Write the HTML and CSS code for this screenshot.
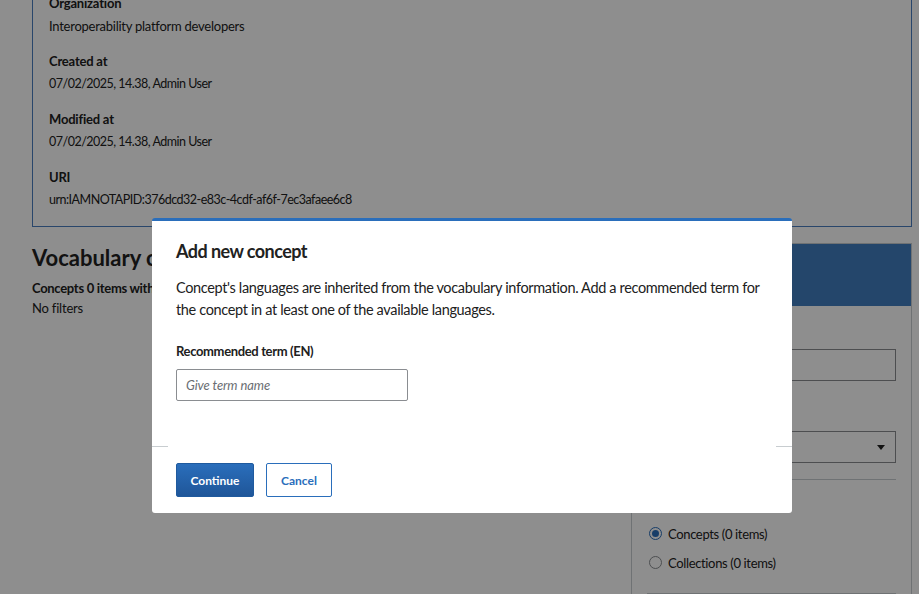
FILE: index.html
```html
<!DOCTYPE html>
<html lang="en">
<head>
<meta charset="utf-8">
<title>Add new concept</title>
<link rel="stylesheet" href="styles.css">
</head>
<body>
<div class="page">
  <section class="info-box">
    <div class="info-group"><div class="info-label">Organization</div><div class="info-value">Interoperability platform developers</div></div>
    <div class="info-group"><div class="info-label">Created at</div><div class="info-value numeric">07/02/2025, 14.38, Admin User</div></div>
    <div class="info-group"><div class="info-label">Modified at</div><div class="info-value numeric">07/02/2025, 14.38, Admin User</div></div>
    <div class="info-group"><div class="info-label">URI</div><div class="info-value numeric">urn:IAMNOTAPID:376dcd32-e83c-4cdf-af6f-7ec3afaee6c8</div></div>
  </section>
  <div class="columns">
    <main class="main-col">
      <h2 class="section-title">Vocabulary concepts</h2>
      <div class="result-count">Concepts 0 items with the selected filters</div>
      <div class="filters">No filters</div>
    </main>
    <aside class="sidebar">
      <div class="sidebar-head">Filter list</div>
      <div class="sidebar-body">
        <div class="field">
          <label class="field-label">Search by term</label>
          <div class="fake-input"></div>
        </div>
        <div class="field">
          <label class="field-label">Status</label>
          <div class="fake-select"><span class="caret"></span></div>
        </div>
        <div class="rule"></div>
        <div class="field radios">
          <div class="field-label">Show only</div>
          <div class="radio-row"><span class="radio checked"></span>Concepts (0 items)</div>
          <div class="radio-row"><span class="radio"></span>Collections (0 items)</div>
        </div>
        <div class="rule"></div>
      </div>
    </aside>
  </div>
</div>
<div class="overlay"></div>
<div class="dialog">
  <div class="dialog-body">
    <h3 class="dialog-title">Add new concept</h3>
    <p class="dialog-text">Concept's languages are inherited from the vocabulary information. Add a recommended term for the concept in at least one of the available languages.</p>
    <label class="term-label">Recommended term (EN)</label>
    <div class="term-input"><span class="placeholder">Give term name</span></div>
  </div>
  <div class="dialog-divider"></div>
  <div class="dialog-footer">
    <button class="btn btn-primary">Continue</button>
    <button class="btn btn-secondary">Cancel</button>
  </div>
</div>
</body>
</html>
```
FILE: styles.css
```css
* { box-sizing: border-box; }
html, body { margin: 0; padding: 0; }
body {
  width: 919px;
  height: 594px;
  overflow: hidden;
  background: #fff;
  font-family: Lato, "Liberation Sans", sans-serif;
  color: #212121;
}
.page {
  padding: 0 7px 0 32px;
  margin-top: -24px;
}
.info-box {
  border: 1px solid #4a7fc0;
  padding: 16px 16px 16px 16px;
  display: flex;
  flex-direction: column;
  gap: 15px;
}
.info-label { font-size: 13px; font-weight: 700; line-height: 20px; letter-spacing: -0.2px; }
.info-value { font-size: 13px; line-height: 20px; margin-top: 3px; letter-spacing: -0.25px; }
.info-value.numeric { font-size: 12.5px; letter-spacing: -0.5px; }
.columns {
  display: flex;
  gap: 16px;
  margin-top: 16px;
}
.main-col { flex: 1; min-width: 0; }
.section-title {
  margin: -1px 0 0 0;
  font-size: 22px;
  line-height: 32px;
  font-weight: 700;
  white-space: nowrap;
}
.result-count { font-size: 13px; font-weight: 700; line-height: 20px; margin-top: 4px; letter-spacing: -0.3px; white-space: nowrap; }
.filters { font-size: 13px; line-height: 20px; letter-spacing: -0.2px; }
.sidebar {
  width: 281px;
  flex: none;
  border: 1px solid #c8cdd0;
  height: 370px;
}
.sidebar-head {
  height: 62px;
  background: #427fc0;
  color: #fff;
  font-size: 18px;
  font-weight: 700;
  padding: 20px 16px;
}
.sidebar-body { padding: 20px 15px 0 15px; }
.field-label { display: block; font-size: 13px; font-weight: 700; line-height: 20px; margin-bottom: 3px; letter-spacing: -0.2px; }
.fake-input, .fake-select {
  height: 32px;
  border: 1px solid #8a8d91;
  background: #fff;
}
.field + .field { margin-top: 27px; }
.fake-select { display: flex; align-items: center; justify-content: flex-end; padding-right: 10px; }
.caret {
  width: 0; height: 0;
  border-left: 4px solid transparent;
  border-right: 4px solid transparent;
  border-top: 5px solid #212121;
}
.rule { height: 1px; background: #c8cdd0; margin-top: 16px; }
.radios { margin-top: 13px; }
.radios .field-label { margin-bottom: 6px; }
.radio-row {
  display: flex;
  align-items: center;
  gap: 6px;
  font-size: 13px;
  line-height: 20px;
  height: 29px;
  padding-left: 2px;
  letter-spacing: -0.35px;
}
.radio {
  width: 13px; height: 13px;
  border-radius: 50%;
  border: 1px solid #8a8d91;
  background: #fff;
  display: inline-flex;
  align-items: center;
  justify-content: center;
  flex: none;
}
.radio.checked { border-color: #2a6ebb; }
.radio.checked::after {
  content: "";
  width: 7px; height: 7px; border-radius: 50%;
  background: #2a6ebb;
}
.overlay {
  position: fixed;
  inset: 0;
  background: rgba(0, 0, 0, 0.443);
}
.dialog {
  position: fixed;
  left: 152px;
  top: 218px;
  width: 640px;
  background: #fff;
  border-top: 3px solid #2a6ebb;
  border-radius: 3px;
}
.dialog-body { padding: 16px 24px 45px 24px; }
.dialog-title {
  margin: 0;
  font-size: 18px;
  line-height: 28px;
  font-weight: 700;
  letter-spacing: -0.55px;
}
.dialog-text {
  margin: 12px 0 0 0;
  font-size: 14.5px;
  line-height: 22px;
  letter-spacing: -0.35px;
}
.term-label {
  display: block;
  margin-top: 20px;
  font-size: 13px;
  font-weight: 700;
  line-height: 20px;
  letter-spacing: -0.35px;
}
.term-input {
  margin-top: 8px;
  width: 232px;
  height: 32px;
  border: 1px solid #8a8d91;
  border-radius: 2px;
  display: flex;
  align-items: center;
  padding-left: 9px;
}
.placeholder { font-size: 13px; font-style: italic; color: #6a6e73; letter-spacing: -0.1px; }
.dialog-divider {
  height: 1px;
  background: linear-gradient(to right, #c8cdd0 16px, transparent 16px, transparent calc(100% - 16px), #c8cdd0 calc(100% - 16px));
}
.dialog-footer {
  display: flex;
  gap: 12px;
  padding: 16px 24px 16px 24px;
}
.btn {
  height: 34px;
  font-family: Lato, "Liberation Sans", sans-serif;
  font-size: 12px;
  font-weight: 700;
  border-radius: 2px;
  padding: 0;
}
.btn-primary {
  width: 78px;
  color: #fff;
  border: 1px solid #1f5a9e;
  background: linear-gradient(to bottom, #2a6ebb, #1f5699);
}
.btn-secondary {
  width: 66px;
  color: #2a6ebb;
  background: #fff;
  border: 1px solid #2a6ebb;
}
```
